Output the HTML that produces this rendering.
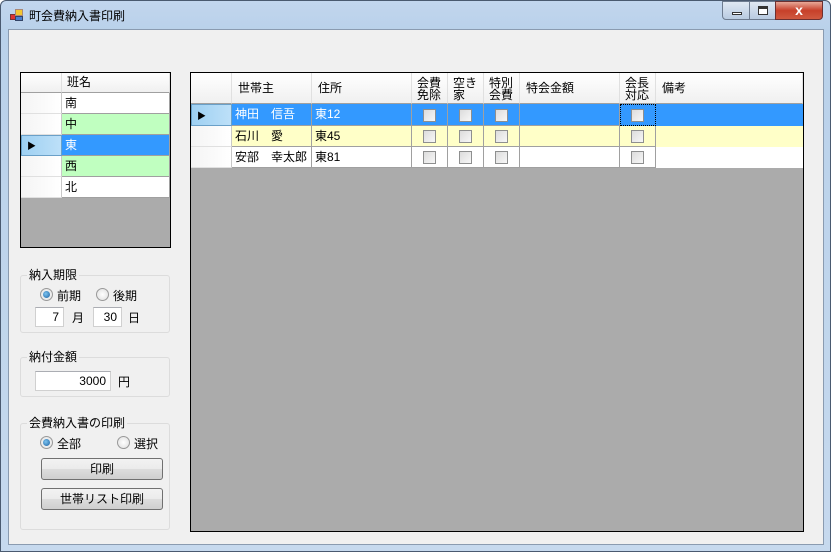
<!DOCTYPE html>
<html><head><meta charset="utf-8"><style>
*{box-sizing:border-box;margin:0;padding:0}
body{width:831px;height:552px;overflow:hidden;background:#fff;font-family:"Liberation Sans","Noto Sans CJK JP",sans-serif;font-size:12px;color:#000;position:relative}
.a{position:absolute}
.frame{left:0;top:0;width:831px;height:552px;border:1px solid #4a5a70;border-radius:6px 6px 0 0;background:linear-gradient(180deg,#c2d6ee 0,#b9d1ea 30px,#c6d9ee 100%)}
.client{left:8px;top:29px;width:816px;height:516px;background:#f0f0f0;border:1px solid #8a9bb0}
.grid{background:#ababab;border:1px solid #000}
.c{position:absolute;border-right:1px solid #a0a0a0;border-bottom:1px solid #a0a0a0;padding-left:3px;line-height:20px;white-space:nowrap;overflow:hidden}
.rh{background:linear-gradient(90deg,#f4f4f4,#fff);border-right:1px solid #c8c8c8;border-bottom:1px solid #e0e0e0}
.hd{background:linear-gradient(180deg,#fff,#f0f0f0);border-right:1px solid #e0e0e0;border-bottom:1px solid #a0a0a0}
.cb{position:absolute;width:13px;height:13px;border:1px solid #8e8f8f;background:linear-gradient(135deg,#dcdcdc,#f7f7f7)}
.gb{position:absolute;border:1px solid #dcdcdc;border-radius:3px}
.gt{position:absolute;background:#f0f0f0;padding:0 2px;top:-8px;left:6px;line-height:14px}
.rad{position:absolute;width:13px;height:13px;border-radius:50%;border:1px solid #999;background:radial-gradient(#fff,#ddd)}
.rad.on::after{content:"";position:absolute;left:2px;top:2px;width:7px;height:7px;border-radius:50%;background:radial-gradient(circle at 40% 40%,#7cc4f0,#1a5fa0)}
.tb{position:absolute;background:#fff;border:1px solid #d0d0d0;border-top-color:#abadb3;text-align:right;padding-right:4px;line-height:18px;height:20px}
.btn{position:absolute;border:1px solid #707070;border-radius:3px;background:linear-gradient(180deg,#f2f2f2 0,#ebebeb 50%,#dddddd 51%,#cfcfcf 100%);text-align:center;line-height:20px}
</style></head><body>
<div class="a frame"></div>
<div class="a" style="left:10px;top:9px;width:13px;height:13px">
<div class="a" style="left:0;top:5px;width:6px;height:6px;background:#d33;border:1px solid #733"></div>
<div class="a" style="left:5px;top:0;width:8px;height:7px;background:#f3c630;border:1px solid #a87"></div>
<div class="a" style="left:5px;top:7px;width:8px;height:5px;background:#4a7fd0;border:1px solid #346"></div>
</div>
<div class="a" style="left:29px;top:7px;font-size:12px">町会費納入書印刷</div>
<div class="a" style="left:722px;top:1px;width:28px;height:19px;border:1px solid #6d7b8f;border-radius:0 0 0 4px;background:linear-gradient(#dfe8f3,#b9cbe1)"><div class="a" style="left:9px;top:10px;width:10px;height:3px;background:#fff;border:1px solid #333"></div></div>
<div class="a" style="left:749px;top:1px;width:27px;height:19px;border:1px solid #6d7b8f;background:linear-gradient(#dfe8f3,#b9cbe1)"><div class="a" style="left:8px;top:4px;width:10px;height:9px;border:1px solid #333;border-top-width:3px;background:#fff"></div></div>
<div class="a" style="left:775px;top:1px;width:48px;height:19px;border:1px solid #6d3030;border-radius:0 0 4px 0;background:linear-gradient(#e8a898,#c7402a 50%,#d05a40);color:#fff;font-weight:bold;text-align:center;line-height:17px;font-size:14px">x</div>
<div class="a client"></div>

<!-- left grid -->
<div class="a grid" style="left:20px;top:72px;width:151px;height:176px">
<div class="c hd" style="left:0;top:0;width:41px;height:20px"></div>
<div class="c hd" style="left:41px;top:0;width:108px;height:20px;line-height:19px;padding-left:5px">班名</div>
<div class="c rh" style="left:0;top:20px;width:41px;height:21px"></div>
<div class="c" style="left:41px;top:20px;width:108px;height:21px;background:#fff">南</div>
<div class="c rh" style="left:0;top:41px;width:41px;height:21px"></div>
<div class="c" style="left:41px;top:41px;width:108px;height:21px;background:#c0ffc0">中</div>
<div class="c" style="left:0;top:62px;width:41px;height:21px;background:linear-gradient(90deg,#9ed0f2,#bde0f8);border:1px solid #6aa0c8"><span style="font-size:9px;position:absolute;left:5px;top:0">▶</span></div>
<div class="c" style="left:41px;top:62px;width:108px;height:21px;background:#3399ff;color:#fff">東</div>
<div class="c rh" style="left:0;top:83px;width:41px;height:21px"></div>
<div class="c" style="left:41px;top:83px;width:108px;height:21px;background:#c0ffc0">西</div>
<div class="c rh" style="left:0;top:104px;width:41px;height:21px"></div>
<div class="c" style="left:41px;top:104px;width:108px;height:21px;background:#fff">北</div>
</div>

<!-- right grid -->
<div class="a grid" style="left:190px;top:72px;width:614px;height:460px">
<div class="c hd" style="left:0;top:0;width:41px;height:31px"></div>
<div class="c hd" style="left:41px;top:0;width:80px;height:31px;line-height:31px;padding-left:6px">世帯主</div>
<div class="c hd" style="left:121px;top:0;width:100px;height:31px;line-height:31px;padding-left:6px">住所</div>
<div class="c hd" style="left:221px;top:0;width:36px;height:31px;line-height:12px;padding:4px 0 0 5px">会費<br>免除</div>
<div class="c hd" style="left:257px;top:0;width:36px;height:31px;line-height:12px;padding:4px 0 0 5px">空き<br>家</div>
<div class="c hd" style="left:293px;top:0;width:36px;height:31px;line-height:12px;padding:4px 0 0 5px">特別<br>会費</div>
<div class="c hd" style="left:329px;top:0;width:100px;height:31px;line-height:31px;padding-left:6px">特会金額</div>
<div class="c hd" style="left:429px;top:0;width:36px;height:31px;line-height:12px;padding:4px 0 0 5px">会長<br>対応</div>
<div class="c hd" style="left:465px;top:0;width:147px;height:31px;line-height:31px;padding-left:6px">備考</div>

<div class="c" style="left:0;top:31px;width:41px;height:22px;background:linear-gradient(90deg,#9ed0f2,#bde0f8);border:1px solid #6aa0c8"><span style="font-size:9px;position:absolute;left:5px;top:1px">▶</span></div>
<div class="a" style="left:41px;top:31px;width:571px;height:22px;background:#3399ff;color:#fff">
<div class="c" style="left:0;top:0;width:80px;height:22px;line-height:21px">神田　信吾</div>
<div class="c" style="left:80px;top:0;width:100px;height:22px;line-height:21px">東12</div>
<div class="c" style="left:180px;width:36px;height:22px"></div><div class="c" style="left:216px;width:36px;height:22px"></div><div class="c" style="left:252px;width:36px;height:22px"></div><div class="c" style="left:288px;width:100px;height:22px"></div><div class="c" style="left:388px;width:36px;height:22px;border:1px dotted #000"></div>
</div>
<div class="a" style="left:41px;top:53px;width:571px;height:21px;background:#ffffc8">
<div class="c" style="left:0;top:0;width:80px;height:21px">石川　愛</div>
<div class="c" style="left:80px;top:0;width:100px;height:21px">東45</div>
<div class="c" style="left:180px;width:36px;height:21px"></div><div class="c" style="left:216px;width:36px;height:21px"></div><div class="c" style="left:252px;width:36px;height:21px"></div><div class="c" style="left:288px;width:100px;height:21px"></div><div class="c" style="left:388px;width:36px;height:21px"></div>
</div>
<div class="a" style="left:41px;top:74px;width:571px;height:21px;background:#fff">
<div class="c" style="left:0;top:0;width:80px;height:21px">安部　幸太郎</div>
<div class="c" style="left:80px;top:0;width:100px;height:21px">東81</div>
<div class="c" style="left:180px;width:36px;height:21px"></div><div class="c" style="left:216px;width:36px;height:21px"></div><div class="c" style="left:252px;width:36px;height:21px"></div><div class="c" style="left:288px;width:100px;height:21px"></div><div class="c" style="left:388px;width:36px;height:21px"></div>
</div>
<div class="c rh" style="left:0;top:53px;width:41px;height:21px"></div>
<div class="c rh" style="left:0;top:74px;width:41px;height:21px"></div>
<div class="cb" style="left:232px;top:36px"></div><div class="cb" style="left:268px;top:36px"></div><div class="cb" style="left:304px;top:36px"></div><div class="cb" style="left:440px;top:36px"></div>
<div class="cb" style="left:232px;top:57px"></div><div class="cb" style="left:268px;top:57px"></div><div class="cb" style="left:304px;top:57px"></div><div class="cb" style="left:440px;top:57px"></div>
<div class="cb" style="left:232px;top:78px"></div><div class="cb" style="left:268px;top:78px"></div><div class="cb" style="left:304px;top:78px"></div><div class="cb" style="left:440px;top:78px"></div>
</div>

<!-- group 1 -->
<div class="gb" style="left:20px;top:275px;width:150px;height:58px"><div class="gt">納入期限</div></div>
<div class="rad on" style="left:40px;top:288px"></div><div class="a" style="left:57px;top:287px">前期</div>
<div class="rad" style="left:96px;top:288px"></div><div class="a" style="left:113px;top:287px">後期</div>
<div class="tb" style="left:35px;top:307px;width:29px">7</div><div class="a" style="left:72px;top:309px">月</div>
<div class="tb" style="left:93px;top:307px;width:29px">30</div><div class="a" style="left:128px;top:309px">日</div>
<!-- group 2 -->
<div class="gb" style="left:20px;top:357px;width:150px;height:40px"><div class="gt">納付金額</div></div>
<div class="tb" style="left:35px;top:371px;width:76px">3000</div><div class="a" style="left:118px;top:373px">円</div>
<!-- group 3 -->
<div class="gb" style="left:20px;top:423px;width:150px;height:107px"><div class="gt">会費納入書の印刷</div></div>
<div class="rad on" style="left:40px;top:436px"></div><div class="a" style="left:57px;top:435px">全部</div>
<div class="rad" style="left:117px;top:436px"></div><div class="a" style="left:134px;top:435px">選択</div>
<div class="btn" style="left:41px;top:458px;width:122px;height:22px">印刷</div>
<div class="btn" style="left:41px;top:488px;width:122px;height:22px">世帯リスト印刷</div>
</body></html>
